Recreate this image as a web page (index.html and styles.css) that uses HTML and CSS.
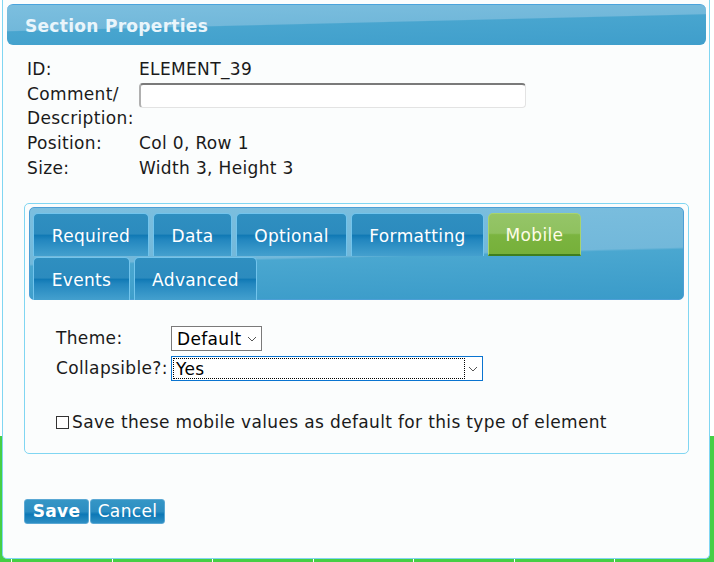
FILE: index.html
```html
<!DOCTYPE html>
<html>
<head>
<meta charset="utf-8">
<link rel="stylesheet" href="styles.css">
</head>
<body>
<div class="dialog">
  <div class="titlebar"><span class="title">Section Properties</span></div>
  <div class="info">
    <div class="lbl">ID:</div><div class="val">ELEMENT_39</div>
    <div class="lbl">Comment/<br>Description:</div><div class="val"><input class="comment" type="text"></div>
    <div class="lbl">Position:</div><div class="val">Col 0, Row 1</div>
    <div class="lbl">Size:</div><div class="val">Width 3, Height 3</div>
  </div>
  <div class="tabbox">
    <div class="tabhead">
      <div class="tabrow">
        <div class="tab">Required</div>
        <div class="tab">Data</div>
        <div class="tab">Optional</div>
        <div class="tab">Formatting</div>
        <div class="tab active">Mobile</div>
      </div>
      <div class="tabrow">
        <div class="tab">Events</div>
        <div class="tab">Advanced</div>
      </div>
    </div>
    <div class="tabbody">
      <div class="form">
        <div class="flbl">Theme:</div>
        <div><div class="sel sel-theme"><span>Default</span><span class="chev"><svg width="10" height="6" viewBox="0 0 10 6"><path d="M1 1l4 4 4-4" fill="none" stroke="#555" stroke-width="1"/></svg></span></div></div>
        <div class="flbl">Collapsible?:</div>
        <div><div class="sel sel-coll"><span class="focus">Yes</span><span class="chev"><svg width="10" height="6" viewBox="0 0 10 6"><path d="M1 1l4 4 4-4" fill="none" stroke="#555" stroke-width="1"/></svg></span></div></div>
      </div>
      <label class="check"><span class="box"></span>Save these mobile values as default for this type of element</label>
    </div>
  </div>
  <div class="buttons">
    <button class="btn save">Save</button><button class="btn">Cancel</button>
  </div>
</div>
</body>
</html>
```
FILE: styles.css
```css
html, body {
  margin: 0;
  padding: 0;
}
body {
  width: 714px;
  height: 562px;
  overflow: hidden;
  background:
    repeating-linear-gradient(90deg, #ffffff 0, #ffffff 1px, transparent 1px, transparent 100.5px) 11px 0 / 100% 100% no-repeat,
    linear-gradient(to bottom, #ffffff 0, #ffffff 436px, #45cf45 436px, #45cf45 100%);
  font-family: "DejaVu Sans", Verdana, sans-serif;
  font-size: 17px;
  letter-spacing: 0.35px;
  color: #1a1a1a;
}
.dialog {
  margin-left: 2px;
  width: 706px;
  height: 554px;
  border: 1px solid #80d6f2;
  border-top: none;
  border-radius: 0 0 5px 5px;
  background: #fbfdfd;
  padding: 4px 0 0 0;
  box-sizing: content-box;
}
.titlebar {
  margin: 0 3px 0 4px;
  height: 41px;
  border-radius: 6px;
  border-top: 1px solid #4aa3dc;
  box-sizing: border-box;
  background: linear-gradient(178.6deg, #7cbfdf 0, #72b8da 45%, #48a5cf 47%, #3f9ecb 100%);
  display: flex;
  align-items: center;
  padding-left: 18px;
}
.title {
  color: #e9f5fb;
  font-weight: bold;
  font-size: 17px;
  letter-spacing: 0.3px;
  margin-top: 1px;
}
.info {
  display: grid;
  grid-template-columns: 112px auto;
  margin: 12px 0 0 24px;
  line-height: 24px;
  row-gap: 1px;
}
.val {
  display: flex;
  align-items: flex-start;
}
.comment {
  width: 387px;
  height: 25px;
  box-sizing: border-box;
  border: 1px solid #e3e3e3;
  border-top: 2px solid #7a7a7a;
  border-left: 2px solid #b0b0b0;
  border-radius: 4px;
  background: #fff;
  margin: 0;
  margin-top: 1px;
}
.tabbox {
  margin: 23px 0 0 21px;
  width: 665px;
  height: 251px;
  box-sizing: border-box;
  border: 1px solid #80d6f2;
  border-radius: 5px;
  padding: 3px 4px;
}
.tabhead {
  height: 93px;
  box-sizing: border-box;
  border: 1px solid #4d9fd6;
  border-radius: 5px;
  background: linear-gradient(178.5deg, #7cbfdf 0, #72b8da 52%, #4aa7d0 54%, #3a9bc9 100%);
  padding: 5px 0 0 3px;
  display: flex;
  flex-direction: column;
  gap: 1px;
}
.tabrow {
  display: flex;
  gap: 4px;
}
.tab {
  height: 43px;
  box-sizing: border-box;
  padding: 0;
  border: 1px solid #72c4ec;
  border-bottom: none;
  border-radius: 5px 5px 0 0;
  background: linear-gradient(to bottom, #2f8fc0 0, #2c8bbe 48%, #0f78b4 50%, #2387bf 62%, #44a0ce 100%);
  color: #fff;
  font-size: 17px;
  display: flex;
  align-items: center;
  justify-content: center;
  padding-top: 2px;
}
.tab:nth-child(1) { width: 116px; }
.tabrow:first-child .tab:nth-child(2) { width: 79px; }
.tabrow:first-child .tab:nth-child(3) { width: 111px; }
.tabrow:first-child .tab:nth-child(4) { width: 133px; }
.tabrow:first-child .tab:nth-child(5) { width: 93px; }
.tabrow:last-child .tab:nth-child(1) { width: 97px; }
.tabrow:last-child .tab:nth-child(2) { width: 123px; }
.tab.active {
  background: linear-gradient(to bottom, #95c568 0, #8fc15f 48%, #7bb440 52%, #76b03a 100%);
  border-color: #a8d46e;
  border-bottom: 2px solid #3f7e1e;
  color: #fffce6;
}
.tabbody {
  padding: 26px 0 0 27px;
}
.form {
  display: grid;
  grid-template-columns: 115px auto;
  row-gap: 5px;
  align-items: center;
}
.flbl {
  line-height: 24px;
  margin-top: -1px;
}
.sel {
  height: 25px;
  box-sizing: border-box;
  border: 1px solid #7a7a7a;
  background: #fff;
  display: flex;
  align-items: center;
  color: #000;
  font-size: 17px;
}
.sel-theme {
  width: 91px;
  padding-left: 5px;
}
.sel-theme span:first-child { flex: 1; }
.sel-theme .chev { width: 18px; display: flex; justify-content: center; }
.sel-coll {
  width: 312px;
  border-color: #0a74d0;
  padding: 1px;
}
.sel-coll .focus {
  flex: 1;
  height: 100%;
  border: 1px dotted #000;
  box-sizing: border-box;
  padding-left: 2px;
  display: flex;
  align-items: center;
}
.sel-coll .chev { width: 16px; display: flex; justify-content: center; }
.check {
  display: flex;
  align-items: center;
  margin-top: 31px;
}
.box {
  width: 11px;
  height: 11px;
  border: 1px solid #333;
  background: #fff;
  margin-right: 3px;
  margin-top: 1px;
}
.buttons {
  margin: 45px 0 0 21px;
  display: flex;
  gap: 1px;
}
.btn {
  height: 25px;
  border: 1px solid #5aa8d4;
  border-radius: 3px;
  background: linear-gradient(to bottom, #3596c6 0, #2c8dc1 50%, #0d78b6 62%, #2e8fc4 100%);
  color: #fff;
  font-family: "DejaVu Sans", Verdana, sans-serif;
  letter-spacing: inherit;
  font-size: 17px;
  padding: 0;
  line-height: 21px;
}
.btn.save {
  font-weight: bold;
  width: 65px;
}
.btn:not(.save) { width: 75px; }
```
